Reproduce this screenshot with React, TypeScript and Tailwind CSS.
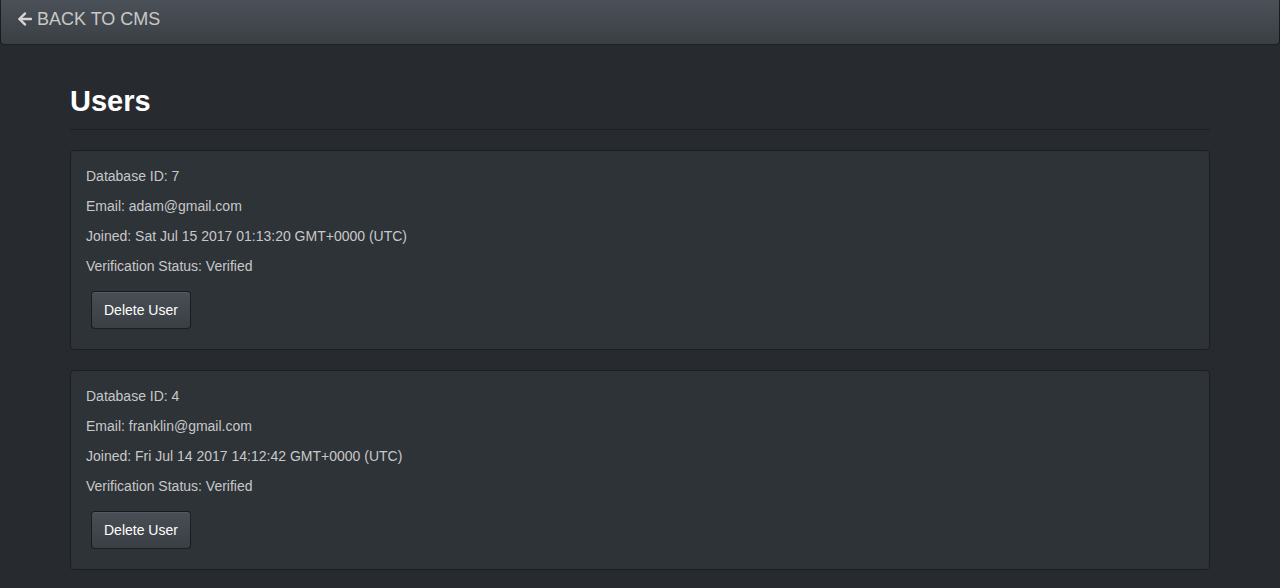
import { FaArrowLeft } from 'react-icons/fa';

interface User {
  id:       number;
  email:    string;
  joined:   string;
  verified: boolean;
}

const USERS: User[] = [
  { id: 7, email: 'adam@gmail.com',     joined: 'Sat Jul 15 2017 01:13:20 GMT+0000 (UTC)', verified: true },
  { id: 4, email: 'franklin@gmail.com', joined: 'Fri Jul 14 2017 14:12:42 GMT+0000 (UTC)', verified: true },
];

function UserPanel({ user }: { user: User }) {
  return (
    <div className="mb-[20px] rounded-[4px] border border-[#1c1e22] bg-[#2e3338] px-[15px] pt-[15px] pb-[15px]">
      <p className="mb-[10px] leading-[20px]">Database ID: {user.id}</p>
      <p className="mb-[10px] leading-[20px]">Email: {user.email}</p>
      <p className="mb-[10px] leading-[20px]">Joined: {user.joined}</p>
      <p className="mb-[10px] leading-[20px]">Verification Status: {user.verified ? 'Verified' : 'Unverified'}</p>
      <button
        type="button"
        className="m-[5px] rounded-[4px] border border-[rgba(0,0,0,0.6)] bg-gradient-to-b from-[#484e55] to-[#3a3f44] px-[12px] py-[8px] text-[14px] leading-[20px] text-white shadow-[inset_0_1px_0_rgba(255,255,255,0.08)]"
      >
        Delete User
      </button>
    </div>
  );
}

export default function App() {
  return (
    <div
      className="min-h-[588px] bg-[#272b30] text-[14px] text-[#c8c8c8]"
      style={{ fontFamily: '"Liberation Sans", Arial, sans-serif' }}
    >
      <nav className="flex h-[45px] items-center rounded-b-[4px] border border-t-0 border-[rgba(0,0,0,0.6)] bg-gradient-to-b from-[#4b5158] to-[#3a3f44] px-[16px] pb-[6px]">
        <a href="#" className="flex items-center gap-[4px] text-[18px] leading-[20px] text-[#c8c8c8]">
          <FaArrowLeft className="h-[16px] w-[16px] text-[#d5d5d5]" />
          <span>BACK TO CMS</span>
        </a>
      </nav>

      <div className="mx-auto w-[1140px]">
        <div className="mt-[40px] mb-[20px] border-b border-[#1c1e22] pb-[11px]">
          <h2 className="text-[29px] font-bold leading-[33px] text-white">Users</h2>
        </div>
        {USERS.map((u) => (
          <UserPanel key={u.id} user={u} />
        ))}
      </div>
    </div>
  );
}
